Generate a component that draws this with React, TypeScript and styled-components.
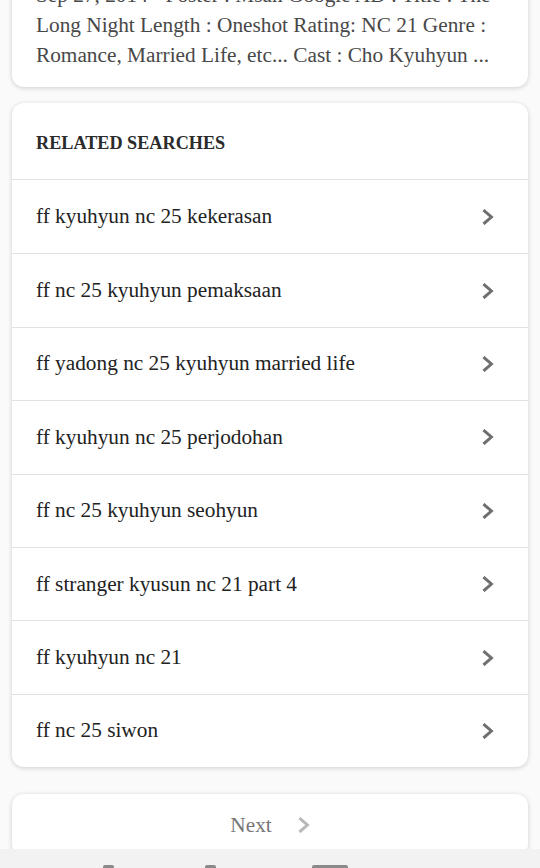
import React from "react";
import styled, { createGlobalStyle } from "styled-components";

const GlobalStyle = createGlobalStyle`
    html, body {
        margin: 0;
        padding: 0;
        background: #fafafa;
        overflow: hidden;
    }
    body {
        font-family: "Liberation Serif", "Times New Roman", serif;
    }
`;

const Page = styled.main`
    height: 868px;
    display: flex;
    flex-direction: column;
    overflow: hidden;
`;

const Feed = styled.div`
    flex: 1;
    display: flex;
    flex-direction: column;
    gap: 16px;
    padding: 0 12px;
    overflow: hidden;
`;

const Card = styled.section`
    background: #fff;
    border-radius: 12px;
    box-shadow: 0 1px 5px rgba(0, 0, 0, 0.18);
    flex-shrink: 0;
`;

/* result card scrolled partly above the fold */
const SnippetCard = styled(Card)`
    margin-top: -44px;
    padding: 24px 24px 17px;
`;

const Snippet = styled.p`
    margin: 0;
    font-size: 21.3px;
    line-height: 30px;
    color: #484848;
`;

const RelatedHeader = styled.h2`
    margin: 0;
    padding: 5px 24px 0;
    height: 77px;
    box-sizing: border-box;
    display: flex;
    align-items: center;
    font-size: 18.2px;
    font-weight: bold;
    color: #2b2b2b;
    border-bottom: 1px solid #e2e2e2;
`;

const List = styled.ul`
    list-style: none;
    margin: 0;
    padding: 0;
`;

const Row = styled.li`
    height: 73.4px;
    box-sizing: border-box;
    display: flex;
    align-items: center;
    justify-content: space-between;
    padding: 0 34px 0 24px;
    font-size: 21.3px;
    color: #222;
    & + & {
        border-top: 1px solid #e2e2e2;
    }
`;

const NextCard = styled(Card)`
    margin-top: 11px;
    height: 62px;
    display: flex;
    align-items: center;
    justify-content: center;
    gap: 26px;
    font-size: 21.3px;
    color: #777;
`;

const NavBar = styled.footer`
    height: 19px;
    flex-shrink: 0;
    background: #f2f2f2;
    display: flex;
    align-items: flex-end;
    padding-left: 103px;
`;

const NavGlyph = styled.span<{ w: number; gap: number }>`
    width: ${(p) => p.w}px;
    margin-right: ${(p) => p.gap}px;
    height: 3px;
    background: #8a8a8a;
    border-radius: 2px 2px 0 0;
`;

const Chevron = ({ color }: { color: string }) => (
    <svg width="12" height="16" viewBox="0 0 12 16" fill="none">
        <path d="M2.6 2 L9.4 8 L2.6 14" stroke={color} strokeWidth="3" strokeLinecap="square" />
    </svg>
);

const searches = [
    "ff kyuhyun nc 25 kekerasan",
    "ff nc 25 kyuhyun pemaksaan",
    "ff yadong nc 25 kyuhyun married life",
    "ff kyuhyun nc 25 perjodohan",
    "ff nc 25 kyuhyun seohyun",
    "ff stranger kyusun nc 21 part 4",
    "ff kyuhyun nc 21",
    "ff nc 25 siwon",
];

export default function App() {
    return (
        <>
            <GlobalStyle />
            <Page>
                <Feed>
                    <SnippetCard>
                        <Snippet>
                            Sep 27, 2014 · Poster : Msan Google AD : Title : The Long Night Length : Oneshot Rating: NC 21 Genre : Romance, Married Life, etc... Cast : Cho Kyuhyun ...
                        </Snippet>
                    </SnippetCard>
                    <Card>
                        <RelatedHeader>RELATED SEARCHES</RelatedHeader>
                        <List>
                            {searches.map((s) => (
                                <Row key={s}>
                                    <span>{s}</span>
                                    <Chevron color="#6f6f6f" />
                                </Row>
                            ))}
                        </List>
                    </Card>
                    <NextCard>
                        <span>Next</span>
                        <Chevron color="#b8b8b8" />
                    </NextCard>
                </Feed>
                <NavBar>
                    <NavGlyph w={11} gap={91} />
                    <NavGlyph w={11} gap={96} />
                    <NavGlyph w={36} gap={0} />
                </NavBar>
            </Page>
        </>
    );
}
